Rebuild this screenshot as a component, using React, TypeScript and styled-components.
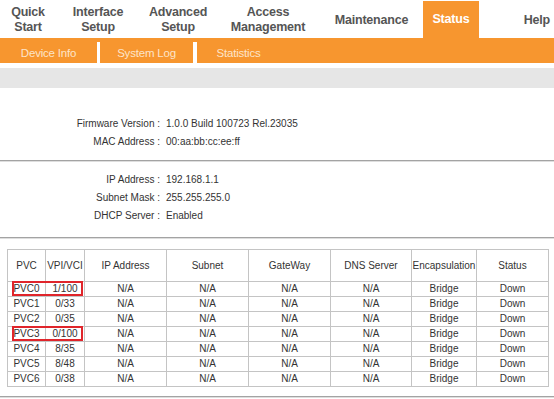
import React from "react";
import styled, { createGlobalStyle } from "styled-components";

const orange = "#f7962f";

const GlobalStyle = createGlobalStyle`
	html, body {
		margin: 0;
		padding: 0;
		background: #ffffff;
		font-family: "Liberation Sans", Arial, sans-serif;
	}
`;

const Page = styled.div`
	width: 554px;
	height: 399px;
	overflow: hidden;
	background: #ffffff;
`;

// Top navigation
const TopNav = styled.div`
	display: flex;
	height: 38px;
	align-items: stretch;
`;

const NavItem = styled.div<{ w: number; active?: boolean; align?: string }>`
	width: ${(p) => p.w}px;
	display: flex;
	align-items: center;
	justify-content: ${(p) => p.align || "center"};
	text-align: center;
	font-size: 12.5px;
	font-weight: bold;
	line-height: 15px;
	letter-spacing: -0.2px;
	color: ${(p) => (p.active ? "#ffffff" : "#555555")};
	background: ${(p) => (p.active ? orange : "transparent")};
	margin-top: ${(p) => (p.active ? "1px" : "0")};
	padding-top: ${(p) => (p.active ? "0" : "2px")};
	padding-right: ${(p) => (p.align === "flex-end" ? "4px" : "0")};
	box-sizing: border-box;
`;

const SubNav = styled.div`
	display: flex;
	height: 25px;
	background: ${orange};
`;

const SubItem = styled.div<{ w: number }>`
	width: ${(p) => p.w}px;
	display: flex;
	align-items: center;
	justify-content: center;
	font-size: 11.5px;
	letter-spacing: -0.2px;
	color: #fde4c9;
	padding-top: 5px;
	box-sizing: border-box;
`;

const SubSep = styled.div<{ w: number }>`
	width: ${(p) => p.w}px;
	margin-top: 4px;
	background: #ffffff;
`;

const GreyBar = styled.div`
	height: 20px;
	margin-top: 5px;
	background: #e6e6e6;
`;

// Info sections
const Section = styled.div<{ pt: number; pb: number }>`
	padding-top: ${(p) => p.pt}px;
	padding-bottom: ${(p) => p.pb}px;
	border-bottom: 1px solid #a3a3a3;
	box-shadow: 0 1px 0 #dedede;
`;

const InfoRow = styled.div`
	display: grid;
	grid-template-columns: 160px 1fr;
	column-gap: 6px;
	height: 18px;
	align-items: center;
	font-size: 10px;
	color: #333333;
`;

const Label = styled.span`
	text-align: right;
`;

const Value = styled.span``;

// PVC table
const TableSection = styled(Section)`
	padding-left: 7px;
`;

const Table = styled.table`
	border-collapse: collapse;
	table-layout: fixed;
	width: 541px;
	border: 1px solid #b9b9b9;
	font-size: 10px;
	color: #333333;
`;

const Th = styled.th<{ w: number }>`
	width: ${(p) => p.w}px;
	height: 31px;
	padding: 0;
	font-weight: normal;
	text-align: center;
	border: 1px solid #c4c4c4;
`;

const Td = styled.td`
	height: 14px;
	padding: 0;
	text-align: center;
	line-height: 14px;
	border: 1px solid #c4c4c4;
	position: relative;
`;

const Marker = styled.span`
	position: absolute;
	left: 4px;
	top: -1px;
	width: 71px;
	height: 15px;
	border: 2px solid #e0252b;
	box-sizing: border-box;
	pointer-events: none;
`;

const navItems = [
	{ label: ["Quick", "Start"], w: 56 },
	{ label: ["Interface", "Setup"], w: 84 },
	{ label: ["Advanced", "Setup"], w: 76 },
	{ label: ["Access", "Management"], w: 104 },
	{ label: ["Maintenance"], w: 103 },
	{ label: ["Status"], w: 56, active: true },
	{ label: ["Help"], w: 75, align: "flex-end" },
];

const columns = [
	{ title: "PVC", w: 37 },
	{ title: "VPI/VCI", w: 38 },
	{ title: "IP Address", w: 81 },
	{ title: "Subnet", w: 81 },
	{ title: "GateWay", w: 81 },
	{ title: "DNS Server", w: 80 },
	{ title: "Encapsulation", w: 64 },
	{ title: "Status", w: 71 },
];

const pvcs = [
	{ name: "PVC0", vpi: "1/100", marked: true },
	{ name: "PVC1", vpi: "0/33" },
	{ name: "PVC2", vpi: "0/35" },
	{ name: "PVC3", vpi: "0/100", marked: true },
	{ name: "PVC4", vpi: "8/35" },
	{ name: "PVC5", vpi: "8/48" },
	{ name: "PVC6", vpi: "0/38" },
];

const App = () => {
	return (
		<Page>
			<GlobalStyle />
			<TopNav>
				{navItems.map((item, idx) => (
					<NavItem key={idx} w={item.w} active={item.active} align={item.align}>
						<div>
							{item.label.map((line, i) => (
								<div key={i}>{line}</div>
							))}
						</div>
					</NavItem>
				))}
			</TopNav>
			<SubNav>
				<SubItem w={97}>Device Info</SubItem>
				<SubSep w={3} />
				<SubItem w={93}>System Log</SubItem>
				<SubSep w={4} />
				<SubItem w={83}>Statistics</SubItem>
			</SubNav>
			<GreyBar />
			<Section pt={26} pb={10}>
				<InfoRow>
					<Label>Firmware Version :</Label>
					<Value>1.0.0 Build 100723 Rel.23035</Value>
				</InfoRow>
				<InfoRow>
					<Label>MAC Address :</Label>
					<Value>00:aa:bb:cc:ee:ff</Value>
				</InfoRow>
			</Section>
			<Section pt={9} pb={13}>
				<InfoRow>
					<Label>IP Address :</Label>
					<Value>192.168.1.1</Value>
				</InfoRow>
				<InfoRow>
					<Label>Subnet Mask :</Label>
					<Value>255.255.255.0</Value>
				</InfoRow>
				<InfoRow>
					<Label>DHCP Server :</Label>
					<Value>Enabled</Value>
				</InfoRow>
			</Section>
			<TableSection pt={11} pb={9}>
				<Table>
					<thead>
						<tr>
							{columns.map((col) => (
								<Th key={col.title} w={col.w}>
									{col.title}
								</Th>
							))}
						</tr>
					</thead>
					<tbody>
						{pvcs.map((row) => (
							<tr key={row.name}>
								<Td>
									{row.name}
									{row.marked && <Marker />}
								</Td>
								<Td>{row.vpi}</Td>
								<Td>N/A</Td>
								<Td>N/A</Td>
								<Td>N/A</Td>
								<Td>N/A</Td>
								<Td>Bridge</Td>
								<Td>Down</Td>
							</tr>
						))}
					</tbody>
				</Table>
			</TableSection>
		</Page>
	);
};

export default App;
